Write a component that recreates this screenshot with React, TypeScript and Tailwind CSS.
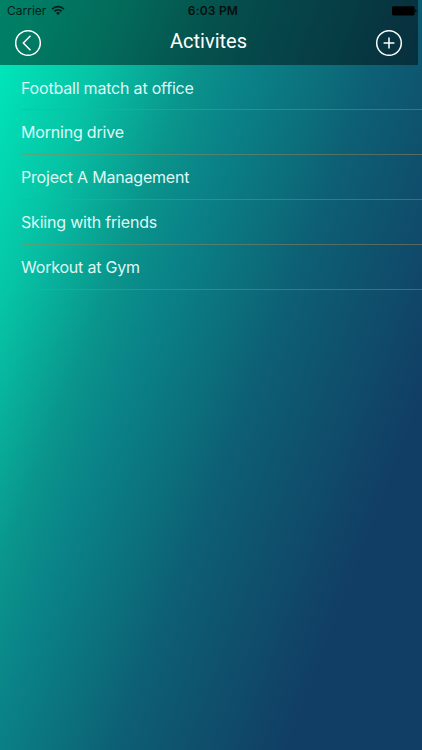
import React from 'react';

const activities = [
  'Football match at office',
  'Morning drive',
  'Project A Management',
  'Skiing with friends',
  'Workout at Gym',
];

function WifiIcon() {
  return (
    <svg width="14" height="11" viewBox="0 0 14 11" fill="none" stroke="#02201b" strokeWidth="1.7">
      <path d="M1.1 4.1a8.4 8.4 0 0 1 11.8 0" />
      <path d="M3.4 6.4a5.1 5.1 0 0 1 7.2 0" />
      <path d="M7 10 4.9 8.1a3 3 0 0 1 4.2 0z" fill="#02201b" stroke="none" />
    </svg>
  );
}

function BatteryIcon() {
  return (
    <svg width="25" height="10" viewBox="0 0 25 10" fill="#000">
      <rect x="0" y="0.3" width="22.6" height="9.2" rx="1.4" />
      <path d="M23.3 3.2c1.6.4 1.6 3 0 3.4z" />
    </svg>
  );
}

function StatusBar() {
  return (
    <div className="grid h-[21px] grid-cols-3 items-center pl-[7px] pr-px text-[#02201b]">
      <div className="flex items-center gap-[5px]">
        <span className="text-[12px]">Carrier</span>
        <WifiIcon />
      </div>
      <span className="pl-[2px] text-center text-[12px] font-semibold tracking-[0.2px] text-[#03100f]">6:03 PM</span>
      <div className="flex justify-end">
        <BatteryIcon />
      </div>
    </div>
  );
}

function NavBar() {
  return (
    <div className="flex h-11 items-center justify-between pl-[14px] pr-[15px] text-white">
      <button aria-label="Back">
        <svg width="28" height="28" viewBox="0 0 28 28" fill="none" stroke="currentColor" strokeWidth="1.5">
          <circle cx="14" cy="14" r="12.3" />
          <path d="M16.5 6.8 9.3 14l7.2 7.2" />
        </svg>
      </button>
      <h1 className="pb-1 font-[Roboto,sans-serif] text-[20px] leading-6">Activites</h1>
      <button aria-label="Add">
        <svg width="28" height="28" viewBox="0 0 28 28" fill="none" stroke="currentColor" strokeWidth="1.5">
          <circle cx="14" cy="14" r="12.3" />
          <path d="M14 8.6v10.8M8.6 14h10.8" />
        </svg>
      </button>
    </div>
  );
}

export default function App() {
  return (
    <div className="min-h-screen w-full bg-[linear-gradient(111deg,#00eabc_0px,#00e5b9_24px,#06c4a6_112px,#0a958c_204px,#0a8388_256px,#0c6c7a_337px,#0d6075_372px,#0f4f6c_455px,#113e65_536px)] font-[Inter,sans-serif]">
      <header className="h-[65px] w-[418px] bg-black/45">
        <StatusBar />
        <NavBar />
      </header>
      <ul className="pl-[21px] pt-[0.6px]">
        {activities.map((name) => (
          <li
            key={name}
            className="flex h-[44.8px] items-center border-b border-[#a08258]/50 pt-[0.4px] text-[16px] tracking-[-0.2px] text-[#dff8f4]"
          >
            {name}
          </li>
        ))}
      </ul>
    </div>
  );
}
